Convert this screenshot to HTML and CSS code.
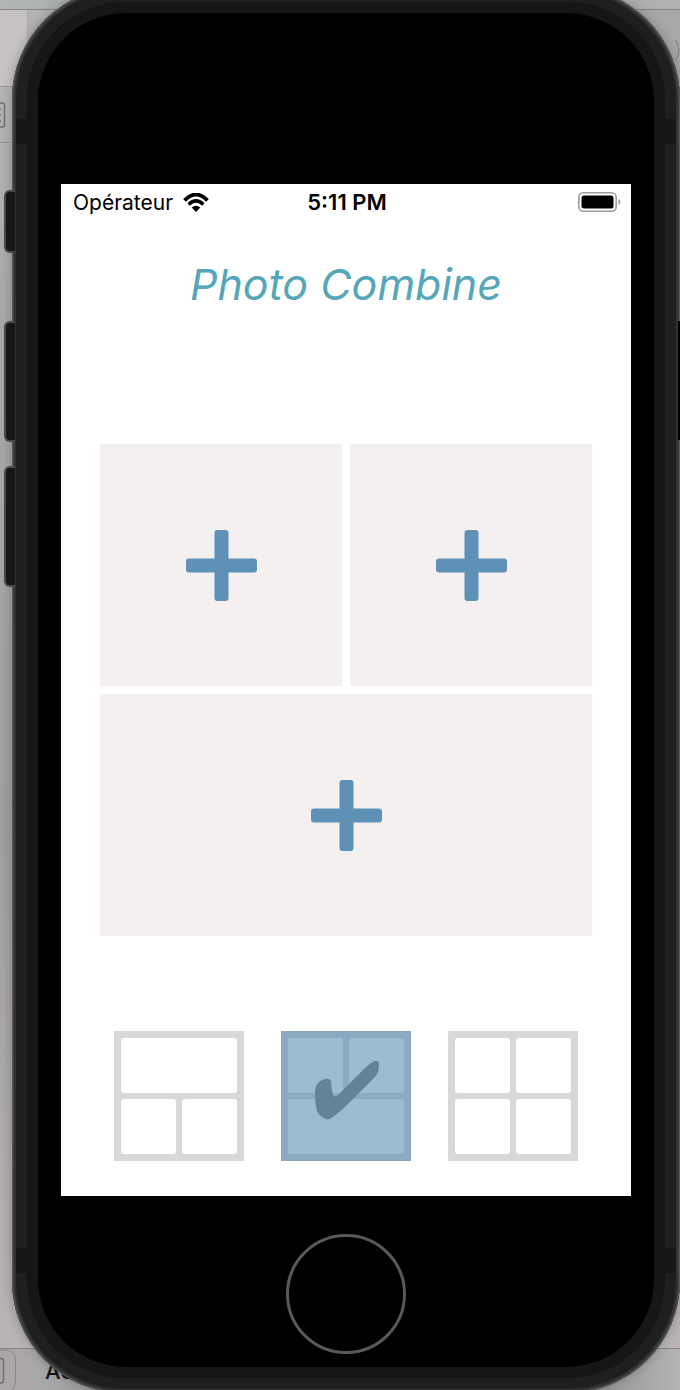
FILE: index.html
```html
<!DOCTYPE html>
<html lang="fr">
<head>
<meta charset="utf-8">
<meta name="viewport" content="width=device-width, initial-scale=1">
<title>Photo Combine</title>
<link rel="stylesheet" href="styles.css">
</head>
<body>
<div class="stage">
  <div class="desktop" aria-hidden="true">
    <div class="desk-top"></div>
    <div class="desk-tabs">
      <svg class="paren" viewBox="0 0 6 24"><path d="M1 2C6 7 6 17 1 22" fill="none" stroke="#8d8a8a" stroke-width="1.5"/></svg>
    </div>
    <div class="desk-tools">
      <svg class="doc-icon" viewBox="0 0 6 26"><path d="M0 1H2.5Q4.500 1 4.500 3V23Q4.500 25 2.500 25H0M0 7H1M0 13H1M0 19H1" fill="none" stroke="#737171" stroke-width="1.500"/></svg>
    </div>
    <div class="desk-body"></div>
    <div class="desk-foot">
      <svg class="foot-icon" viewBox="0 0 17 44"><path d="M0 1H4Q15.500 1 15.500 12V32Q15.500 43 4 43H0" fill="none" stroke="#898787"/><path d="M0 9.500H1Q3.500 9.500 3.500 12V31Q3.500 34 1 34H0" fill="none" stroke="#706e6e" stroke-width="1.500"/></svg>
      <span class="foot-text">Ac</span>
    </div>
  </div>

  <main class="phone">
    <i class="key key-mute"></i>
    <i class="key key-up"></i>
    <i class="key key-down"></i>
    <i class="key key-power"></i>
    <div class="shell">
      <i class="band band-top"></i>
      <i class="band band-bottom"></i>
      <div class="bezel">
        <div class="face">
          <section class="screen">
            <header class="status">
              <span class="carrier">Opérateur
                <svg class="wifi" viewBox="0 0 26 19" aria-label="Wi-Fi"><path d="M1.500 7.300Q13-4.200 24.500 7.300" fill="none" stroke="#000" stroke-width="3.800"/><path d="M5.600 11.500Q13 4.300 20.400 11.500" fill="none" stroke="#000" stroke-width="3.400"/><path d="M8.700 14.600Q13 10.900 17.300 14.600L13 19Z"/></svg>
              </span>
              <time class="time">5:11 PM</time>
              <svg class="battery" viewBox="0 0 43 20" aria-label="Batterie"><rect x=".8" y=".8" width="37.400" height="18.400" rx="4.500" fill="none" stroke="#9b9b9b" stroke-width="1.600"/><rect x="3.500" y="3.500" width="32" height="13" rx="2.500"/><path d="M40.500 7Q42.500 8 42.500 10T40.500 13Z" fill="#9b9b9b"/></svg>
            </header>
            <h1 class="title">Photo Combine</h1>
            <div class="collage">
              <button class="slot" type="button" aria-label="Ajouter une photo"><svg class="plus" viewBox="0 0 71 71"><rect x="28.500" width="14" height="71" rx="3"/><rect y="28.500" width="71" height="14" rx="3"/></svg></button>
              <button class="slot" type="button" aria-label="Ajouter une photo"><svg class="plus" viewBox="0 0 71 71"><rect x="28.500" width="14" height="71" rx="3"/><rect y="28.500" width="71" height="14" rx="3"/></svg></button>
              <button class="slot wide" type="button" aria-label="Ajouter une photo"><svg class="plus" viewBox="0 0 71 71"><rect x="28.500" width="14" height="71" rx="3"/><rect y="28.500" width="71" height="14" rx="3"/></svg></button>
            </div>
            <nav class="layouts">
              <button class="layout" type="button" aria-label="Disposition 1"><i class="cell wide"></i><i class="cell"></i><i class="cell"></i></button>
              <button class="layout selected" type="button" aria-label="Disposition 2" aria-pressed="true"><i class="cell"></i><i class="cell"></i><i class="cell wide"></i>
                <svg class="check" viewBox="0 0 130 130"><path d="M50 50C48 46 42 48 38 51Q34 55 34 61Q34 74 36 80Q39 86 45 88Q48 89 52 86Q60 80 69 71L94 46Q98 41 98 34Q98 29 94 30Q90 31 83 38L57 64Q54 67 52 64Q51 61 50 50Z"/></svg></button>
              <button class="layout" type="button" aria-label="Disposition 3"><i class="cell"></i><i class="cell"></i><i class="cell"></i><i class="cell"></i></button>
            </nav>
          </section>
          <button class="home" type="button" aria-label="Accueil"></button>
        </div>
      </div>
    </div>
  </main>
</div>
</body>
</html>
```
FILE: styles.css
```css
* { box-sizing: border-box; }
body { margin: 0; font-family: Inter, "Liberation Sans", sans-serif; }
button { padding: 0; border: 0; font: inherit; cursor: pointer; }
svg { display: block; }

.stage { position: relative; overflow: hidden; min-height: 100vh; }

/* Window behind the simulator */
.desktop {
  position: absolute;
  inset: 0;
  display: flex;
  flex-direction: column;
  background: linear-gradient(#bcb8b8, #aaa7a7 25%, #a29f9f 60%, #bcb6b8);
}
.desk-top { height: 10px; background: linear-gradient(90deg, #b2b6b6, #999 50%, #b2b2b2); border-bottom: 1px solid #858585; }
.desk-tabs { display: flex; justify-content: flex-end; height: 77px; padding-top: 28px; border-bottom: 1px solid #999696; background: linear-gradient(90deg, #c7c2c3 27px, #a5a2a2 27px, #b5b2b2 28px, #aaa7a8); }
.desk-tools { height: 56px; padding-top: 15px; border-bottom: 1px solid #969393; }
.desk-body { flex: 1; }
.desk-foot { display: flex; gap: 28px; height: 42px; background: linear-gradient(90deg, #aba6a8 27px, #aaa 28px, #777 50%, #8f8f8f 85%, #b4b4b4); border-top: 1px solid #858383; }
.paren { width: 6px; height: 24px; }
.doc-icon { width: 6px; height: 26px; }
.foot-icon { width: 17px; height: 44px; }
.foot-text { font-size: 22px; font-weight: 500; line-height: 44px; color: #151515; }

/* Device */
.phone {
  position: relative;
  margin: -13px 0 -3px 12px;
  padding: 4px;
  border-radius: 112px;
  background: #303131;
  box-shadow: inset 0 0 0 1px #555656, inset 0 0 0 2px #404141, 0 0 12px rgba(0, 0, 0, .25);
}
.shell { position: relative; padding: 11px; border-radius: 108px; background: #1f1f1f; }
.bezel { position: relative; padding: 11px; border-radius: 97px; background: #161616; }
.face { display: flex; flex-direction: column; align-items: center; padding: 171px 23px 13px; border-radius: 88px; background: #000; }
.band { position: absolute; left: 0; right: 0; height: 25px; background: #161616; }
.band-top { top: 128px; }
.band-bottom { bottom: 116px; }
.key { position: absolute; left: -8px; width: 11px; border: 2px solid #484949; border-right: 0; border-radius: 6px 0 0 6px; background: #171717; }
.key-mute { top: 203px; height: 63px; }
.key-up { top: 334px; height: 121px; }
.key-down { top: 479px; height: 121px; }
.key-power { top: 334px; left: auto; right: 0; width: 2px; height: 119px; border: 0; border-radius: 0; background: #000; }

/* App */
.screen { align-self: stretch; padding-bottom: 35px; background: #fff; }
.status { display: grid; grid-template-columns: 1fr auto 1fr; align-items: center; height: 36px; padding: 0 10px 0 12px; font-size: 21px; color: #000; }
.carrier { display: flex; align-items: center; gap: 10px; }
.wifi { width: 26px; height: 19px; }
.time { font-size: 22px; font-weight: 600; }
.battery { width: 43px; height: 20px; justify-self: end; }
.title { margin: 36px 0 132px; font-size: 43px; font-style: italic; font-weight: 400; line-height: 56px; text-align: center; color: #55a6b8; }
.collage { display: grid; grid-template-columns: 1fr 1fr; gap: 8px; margin: 0 39px; }
.slot { display: grid; place-items: center; height: 242px; background: #f4f0f0; }
.wide { grid-column: span 2; }
.plus { width: 71px; height: 71px; fill: #5f91b7; }
.layouts { display: flex; justify-content: center; gap: 37px; margin-top: 95px; }
.layout { position: relative; display: grid; grid-template-columns: 1fr 1fr; grid-auto-rows: 55px; gap: 6px; width: 130px; padding: 7px; background: #d8d8d8; }
.cell { border-radius: 3px; background: #fff; }
.selected { background: #8cabc2; }
.selected .cell { background: #9dbbd1; }
.check { position: absolute; inset: 0; fill: #648399; }
.home { width: 120px; height: 120px; margin-top: 38px; border: 3px solid #595959; border-radius: 50%; background: #000; }
```
